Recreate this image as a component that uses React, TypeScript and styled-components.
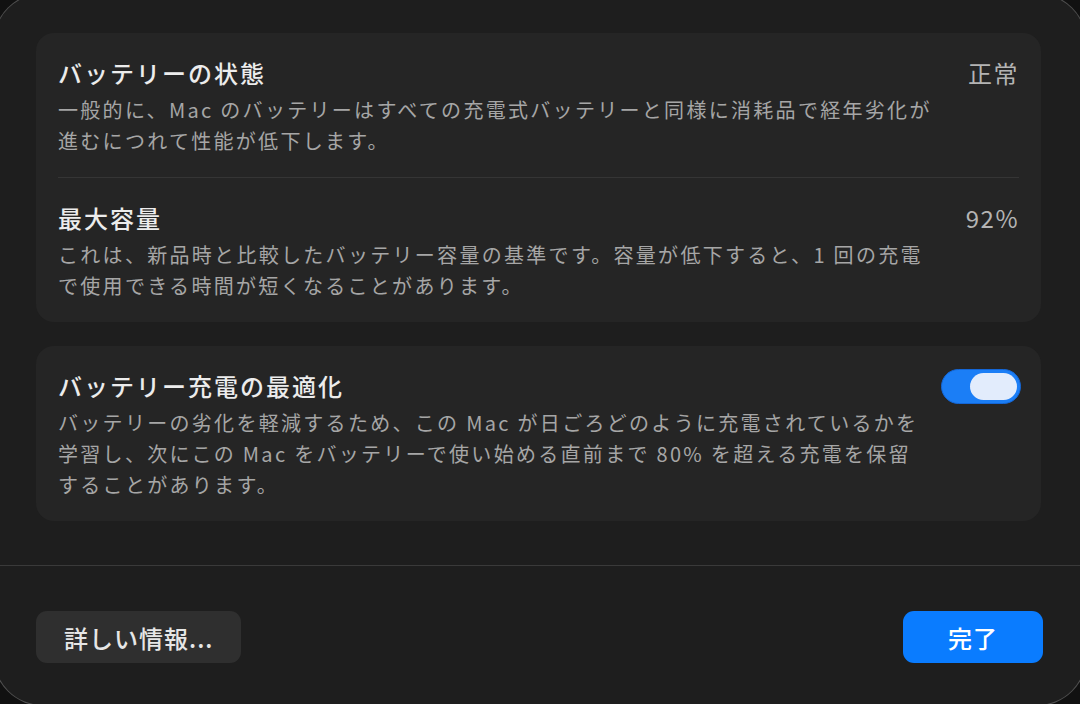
import React, { useState } from 'react';
import styled, { createGlobalStyle } from 'styled-components';

const GlobalStyle = createGlobalStyle`
  html, body {
    margin: 0;
    padding: 0;
    background: #111111;
    overflow: hidden;
  }
  body {
    font-family: "Noto Sans CJK JP", "Noto Sans", sans-serif;
    -webkit-font-smoothing: antialiased;
  }
`;

const Viewport = styled.div`
  width: 1080px;
  height: 704px;
  overflow: hidden;
`;

const Window = styled.div`
  margin: -7px 0 0 -7px;
  width: 1094px;
  height: 713px;
  box-sizing: border-box;
  border-radius: 50px;
  border: 1.5px solid rgba(255, 255, 255, 0.22);
  background: #1e1e1e;
  display: flex;
  flex-direction: column;
`;

const Content = styled.div`
  padding: 39px 45px 44px 42px;
  display: flex;
  flex-direction: column;
  gap: 24px;
`;

const Card = styled.section`
  background: #252525;
  border-radius: 18px;
  display: flex;
  flex-direction: column;
`;

const Row = styled.div`
  display: flex;
  align-items: flex-start;
  justify-content: space-between;
  padding: 22px 22px 21px;
`;

const RowDivider = styled.div`
  height: 1px;
  margin: 0 22px;
  background: #353535;
`;

const TextBlock = styled.div`
  display: flex;
  flex-direction: column;
  gap: 3px;
`;

const Title = styled.div`
  font-size: 24px;
  line-height: 36px;
  font-weight: 500;
  letter-spacing: 2px;
  color: #ececec;
`;

const Description = styled.div`
  font-size: 20px;
  line-height: 31px;
  letter-spacing: 2.3px;
  color: #a6a6a6;
  white-space: nowrap;
`;

const Value = styled.div`
  font-size: 24px;
  line-height: 36px;
  letter-spacing: 1.5px;
  color: #b4b4b4;
  white-space: nowrap;
`;

const Toggle = styled.button<{ $on: boolean }>`
  flex: none;
  margin: 1px -2px 0 0;
  width: 80px;
  height: 35px;
  padding: 3px;
  border: 1px solid ${p => (p.$on ? '#1466d6' : '#4a4a4a')};
  border-radius: 18px;
  background: ${p => (p.$on ? '#1b7ef6' : '#3a3a3a')};
  display: flex;
  justify-content: ${p => (p.$on ? 'flex-end' : 'flex-start')};
  cursor: pointer;
  box-sizing: border-box;
`;

const Knob = styled.span`
  width: 47px;
  height: 27px;
  border-radius: 14px;
  background: #e2ecfc;
`;

const Separator = styled.div`
  height: 1px;
  background: #3a3a3a;
`;

const Footer = styled.div`
  padding: 45px 43px 0 42px;
  display: flex;
  justify-content: space-between;
`;

const Button = styled.button<{ $primary?: boolean }>`
  height: 52px;
  padding: 0 ${p => (p.$primary ? '45px' : '28px')};
  border: none;
  border-radius: 11px;
  background: ${p => (p.$primary ? '#0a7cff' : '#2f2f2f')};
  color: ${p => (p.$primary ? '#ffffff' : '#e6e6e6')};
  font-family: "Noto Sans CJK JP", "Noto Sans", sans-serif;
  font-size: 24px;
  font-weight: 500;
  letter-spacing: 1px;
  cursor: pointer;
`;

const Lines: React.FC<{ lines: string[] }> = ({ lines }) => (
  <Description>
    {lines.map((l, i) => (
      <div key={i}>{l}</div>
    ))}
  </Description>
);

export default function App() {
  const [optimized, setOptimized] = useState(true);

  return (
    <>
      <GlobalStyle />
      <Viewport>
        <Window>
          <Content>
            <Card>
              <Row>
                <TextBlock>
                  <Title>バッテリーの状態</Title>
                  <Lines
                    lines={[
                      '一般的に、Mac のバッテリーはすべての充電式バッテリーと同様に消耗品で経年劣化が',
                      '進むにつれて性能が低下します。',
                    ]}
                  />
                </TextBlock>
                <Value>正常</Value>
              </Row>
              <RowDivider />
              <Row>
                <TextBlock>
                  <Title>最大容量</Title>
                  <Lines
                    lines={[
                      'これは、新品時と比較したバッテリー容量の基準です。容量が低下すると、1 回の充電',
                      'で使用できる時間が短くなることがあります。',
                    ]}
                  />
                </TextBlock>
                <Value>92%</Value>
              </Row>
            </Card>

            <Card>
              <Row>
                <TextBlock>
                  <Title>バッテリー充電の最適化</Title>
                  <Lines
                    lines={[
                      'バッテリーの劣化を軽減するため、この Mac が日ごろどのように充電されているかを',
                      '学習し、次にこの Mac をバッテリーで使い始める直前まで 80% を超える充電を保留',
                      'することがあります。',
                    ]}
                  />
                </TextBlock>
                <Toggle $on={optimized} onClick={() => setOptimized(!optimized)}>
                  <Knob />
                </Toggle>
              </Row>
            </Card>
          </Content>

          <Separator />

          <Footer>
            <Button>詳しい情報...</Button>
            <Button $primary>完了</Button>
          </Footer>
        </Window>
      </Viewport>
    </>
  );
}
